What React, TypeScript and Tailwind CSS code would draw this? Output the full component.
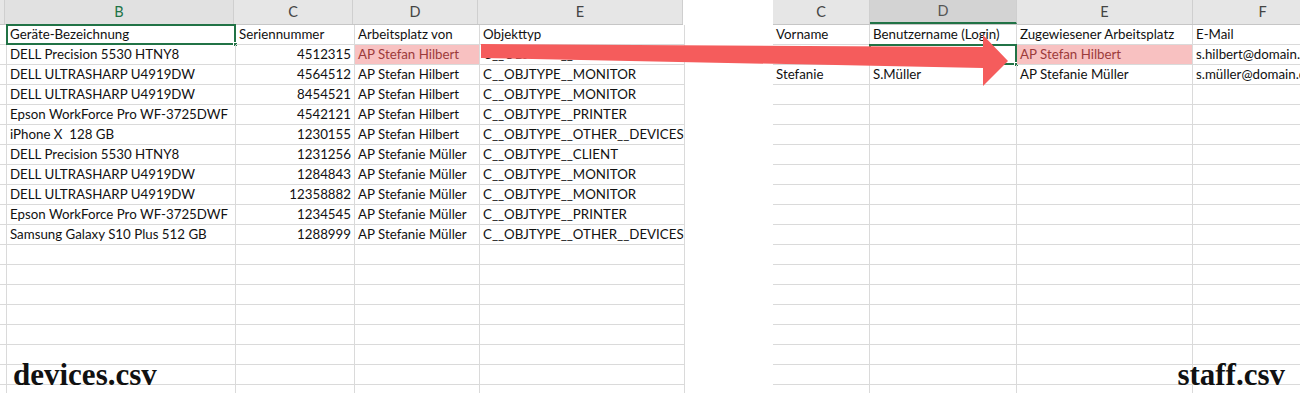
import React from "react";

type Col = { label: string; w: string; active?: "focus" | "dim" };
type Cell = { text?: string; num?: boolean; pink?: boolean; selected?: boolean };

const leftCols: Col[] = [
  { label: "", w: "w-[5px]" },
  { label: "B", w: "w-[229px]", active: "focus" },
  { label: "C", w: "w-[119px]" },
  { label: "D", w: "w-[125px]" },
  { label: "E", w: "w-[205px]" },
];

const rightCols: Col[] = [
  { label: "C", w: "w-[97px]" },
  { label: "D", w: "w-[147px]", active: "dim" },
  { label: "E", w: "w-[176px]" },
  { label: "F", w: "w-[140px]" },
];

const devices: [string, string, string, string][] = [
  ["DELL Precision 5530 HTNY8", "4512315", "AP Stefan Hilbert", "C__OBJTYPE__CLIENT"],
  ["DELL ULTRASHARP U4919DW", "4564512", "AP Stefan Hilbert", "C__OBJTYPE__MONITOR"],
  ["DELL ULTRASHARP U4919DW", "8454521", "AP Stefan Hilbert", "C__OBJTYPE__MONITOR"],
  ["Epson WorkForce Pro WF-3725DWF", "4542121", "AP Stefan Hilbert", "C__OBJTYPE__PRINTER"],
  ["iPhone X  128 GB", "1230155", "AP Stefan Hilbert", "C__OBJTYPE__OTHER__DEVICES"],
  ["DELL Precision 5530 HTNY8", "1231256", "AP Stefanie Müller", "C__OBJTYPE__CLIENT"],
  ["DELL ULTRASHARP U4919DW", "1284843", "AP Stefanie Müller", "C__OBJTYPE__MONITOR"],
  ["DELL ULTRASHARP U4919DW", "12358882", "AP Stefanie Müller", "C__OBJTYPE__MONITOR"],
  ["Epson WorkForce Pro WF-3725DWF", "1234545", "AP Stefanie Müller", "C__OBJTYPE__PRINTER"],
  ["Samsung Galaxy S10 Plus 512 GB", "1288999", "AP Stefanie Müller", "C__OBJTYPE__OTHER__DEVICES"],
];

const ROWS = 19;

const leftRows: Cell[][] = [
  [{}, { text: "Geräte-Bezeichnung", selected: true }, { text: "Seriennummer" }, { text: "Arbeitsplatz von" }, { text: "Objekttyp" }],
  ...devices.map((d, i) => [
    {},
    { text: d[0] },
    { text: d[1], num: true },
    { text: d[2], pink: i === 0 },
    { text: d[3] },
  ]),
];

const rightRows: Cell[][] = [
  [{ text: "Vorname" }, { text: "Benutzername (Login)" }, { text: "Zugewiesener Arbeitsplatz" }, { text: "E-Mail" }],
  [{}, { selected: true }, { text: "AP Stefan Hilbert", pink: true }, { text: "s.hilbert@domain.de" }],
  [{ text: "Stefanie" }, { text: "S.Müller" }, { text: "AP Stefanie Müller" }, { text: "s.müller@domain.de" }],
];

function HeaderRow({ cols }: { cols: Col[] }) {
  return (
    <div className="flex h-[25px] bg-[#e6e6e6] border-b border-[#c6c6c6]">
      {cols.map((c, i) => (
        <div
          key={i}
          className={`${c.w} shrink-0 flex items-center justify-center border-r border-[#cfcfcf] text-[14.5px] ${
            c.active === "focus"
              ? "text-[#217346] bg-[#e1e1e1]"
              : c.active === "dim"
              ? "text-[#555] bg-[#d3d3d3] border-b-2 border-b-[#217346]"
              : "text-[#444]"
          }`}
        >
          {c.label}
        </div>
      ))}
    </div>
  );
}

function Sheet({ cols, rows }: { cols: Col[]; rows: Cell[][] }) {
  return (
    <div className="flex flex-col">
      <HeaderRow cols={cols} />
      {Array.from({ length: ROWS }).map((_, r) => (
        <div key={r} className="flex h-[20px]">
          {cols.map((c, i) => {
            const cell = rows[r]?.[i] ?? {};
            return (
              <div
                key={i}
                className={`${c.w} shrink-0 relative flex items-center whitespace-pre border-r border-b border-[#dadada] px-[3px] pt-px text-[13.3px] ${
                  cell.num ? "justify-end" : ""
                } ${cell.pink ? "bg-[#f8c1c1] text-[#9c3b3b]" : "text-[#111]"}`}
              >
                {cell.text}
                {cell.selected && (
                  <>
                    <div className="absolute -left-px -top-px right-[-1px] bottom-[-1px] border-2 border-[#217346]" />
                    <div className="absolute right-[-3px] bottom-[-3px] w-[5px] h-[5px] bg-[#217346] border border-white" />
                  </>
                )}
              </div>
            );
          })}
        </div>
      ))}
    </div>
  );
}

function Arrow() {
  return (
    <svg className="absolute left-0 top-0 pointer-events-none" width="1300" height="393" viewBox="0 0 1300 393">
      <polygon
        points="481,44 983,47 983,35 1008,61 983,86 983,68 481,58"
        fill="#f55c5c"
      />
    </svg>
  );
}

export default function App() {
  return (
    <div
      className="relative w-[1300px] h-[393px] overflow-hidden bg-white"
      style={{ fontFamily: "Lato, 'Open Sans', sans-serif" }}
    >
      <div className="flex">
        <div className="w-[683px] shrink-0">
          <Sheet cols={leftCols} rows={leftRows} />
        </div>
        <div className="w-[90px] shrink-0" />
        <div className="flex-1 overflow-hidden">
          <Sheet cols={rightCols} rows={rightRows} />
        </div>
      </div>
      <Arrow />
      <div className="absolute left-[13px] bottom-[3px] text-[31px] font-bold leading-none text-[#111] font-['Liberation_Serif',serif]">
        devices.csv
      </div>
      <div className="absolute right-[15px] bottom-[3px] text-[31px] font-bold leading-none text-[#111] font-['Liberation_Serif',serif]">
        staff.csv
      </div>
    </div>
  );
}
